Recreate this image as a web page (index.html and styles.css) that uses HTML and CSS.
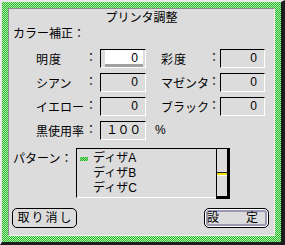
FILE: index.html
```html
<!DOCTYPE html>
<html>
  <head>
    <meta charset="UTF-8" />
    <title>プリンタ調整</title>
    <link rel="stylesheet" href="styles.css">
  </head>
  <body>
    <div class="window">
      <div class="panel">
        <div class="title">プリンタ調整</div>
        <div class="section">カラー補正：</div>
        <div class="colors">
          <div class="row">
            <span class="label wide">明度</span>
            <span class="colon">：</span>
            <div class="field active">0</div>
            <span></span>
            <span class="label second wide">彩度</span>
            <span class="colon">：</span>
            <div class="field">0</div>
          </div>
          <div class="row">
            <span class="label">シアン</span>
            <span class="colon">：</span>
            <div class="field">0</div>
            <span></span>
            <span class="label second">マゼンタ</span>
            <span class="colon">：</span>
            <div class="field">0</div>
          </div>
          <div class="row">
            <span class="label">イエロー</span>
            <span class="colon">：</span>
            <div class="field">0</div>
            <span></span>
            <span class="label second">ブラック</span>
            <span class="colon">：</span>
            <div class="field">0</div>
          </div>
          <div class="row">
            <span class="label">黒使用率</span>
            <span class="colon">：</span>
            <div class="field full">１００</div>
            <span></span>
            <span class="pct">%</span>
          </div>
        </div>
        <div class="pattern">
          <span class="pattern-label">パターン：</span>
          <div class="list">
            <div class="item"><span class="mark on"></span>ディザA</div>
            <div class="item"><span class="mark"></span>ディザB</div>
            <div class="item"><span class="mark"></span>ディザC</div>
          </div>
          <div class="scroll">
            <div class="thumb"></div>
          </div>
        </div>
        <div class="buttons">
          <button class="btn cancel">取り消し</button>
          <button class="btn ok"><span>設</span><span>定</span></button>
        </div>
      </div>
    </div>
  </body>
</html>
```
FILE: styles.css
```css
* {
  box-sizing: border-box;
}
body {
  margin: 0;
  font-family: "Liberation Sans", "Noto Sans CJK JP", sans-serif;
  font-size: 12px;
  color: #000;
}
.window {
  width: 285px;
  height: 245px;
  border-style: solid;
  border-width: 2px 4px 3px 2px;
  border-color: #e8e8e8 #1c1c1c #1c1c1c #e8e8e8;
  padding: 6px;
  background: repeating-conic-gradient(#2dbb2d 0 25%, #a8eea8 0 50%) 0 0 / 2px 2px;
}
.panel {
  height: 100%;
  background: #dcdcdc;
  border: 1px solid;
  border-color: #8c8c8c #f2f2f2 #f2f2f2 #8c8c8c;
  display: flex;
  flex-direction: column;
}
.title {
  margin-top: 1px;
  line-height: 16px;
  text-align: center;
}
.section {
  line-height: 16px;
  padding-left: 4px;
}
.colors {
  margin-top: 7px;
  padding-left: 27px;
  display: grid;
  row-gap: 5px;
}
.row {
  display: grid;
  grid-template-columns: 49px 15px 46px 9px 53px 12px 45px;
  align-items: center;
  height: 19px;
}
.label {
  white-space: nowrap;
}
.label.wide {
  letter-spacing: 1px;
}
.label.second {
  padding-left: 6px;
}
.colon {
  line-height: 19px;
}
.field {
  height: 19px;
  line-height: 17px;
  text-align: right;
  padding-right: 7px;
  border-style: solid;
  border-width: 1px;
  border-color: #000 #fff #fff #000;
}
.field.active {
  background: #fff;
  box-shadow: inset 4px 0 0 #dcdcdc, inset -2px 0 0 #dcdcdc, inset 0 -3px 0 #a0a0a0;
}
.field.full {
  padding-right: 4px;
  letter-spacing: -0.3px;
}
.pct {
  line-height: 19px;
}
.pattern {
  margin-top: 8px;
  padding-left: 4px;
  display: grid;
  grid-template-columns: 63px 140px 14px;
  align-items: start;
}
.pattern-label {
  padding-top: 4px;
  line-height: 15px;
  white-space: nowrap;
}
.list {
  height: 50px;
  padding-top: 2px;
  border-top: 1px solid #000;
  border-left: 1px solid #000;
  border-bottom: 1px solid #fff;
}
.item {
  display: flex;
  align-items: center;
  gap: 5px;
  padding-left: 3px;
  line-height: 15px;
}
.mark {
  width: 8px;
  height: 4px;
}
.mark.on {
  background: repeating-conic-gradient(#22aa22 0 25%, #8be88b 0 50%) 0 0 / 2px 2px;
}
.scroll {
  height: 51px;
  border-style: solid;
  border-width: 1px 3px 3px 1px;
  border-color: #000;
}
.thumb {
  margin-top: 23px;
  height: 4px;
  background: #f0e000;
  border-top: 1px solid #222;
  border-bottom: 1px solid #fff;
}
.buttons {
  margin-top: 9px;
  padding: 0 5px 0 3px;
  display: flex;
  justify-content: space-between;
}
.btn {
  width: 65px;
  height: 20px;
  padding: 0;
  border: 1px solid #000;
  border-radius: 5px;
  background: #dcdcdc;
  font: inherit;
  color: #000;
  line-height: 18px;
}
.cancel {
  letter-spacing: 2px;
  padding-left: 2px;
}
.ok {
  display: flex;
  justify-content: space-between;
  align-items: center;
  padding: 0 10px 0 2px;
  box-shadow: inset 0 0 0 1px #fff, inset 0 0 0 3px #9a9ab4;
}
```
